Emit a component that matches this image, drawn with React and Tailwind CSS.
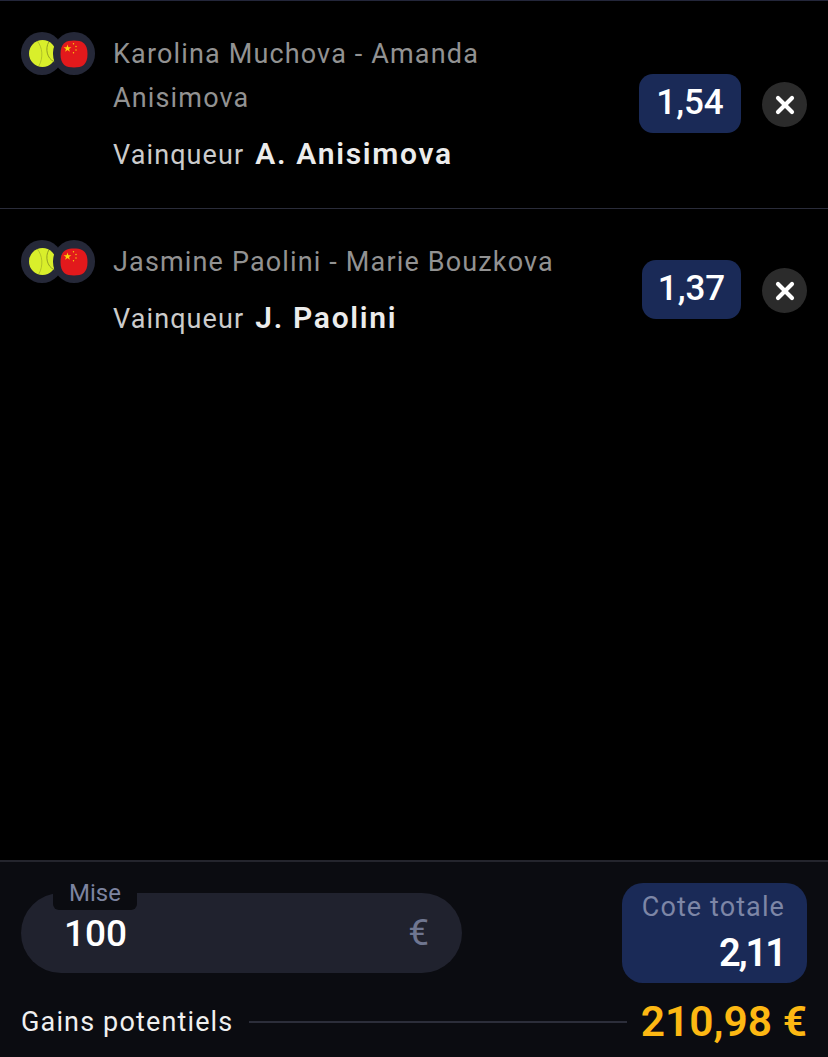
import React from 'react';
import { X } from 'lucide-react';

const font = "font-['Roboto',sans-serif]";

function TennisBall() {
  return (
    <svg width="27" height="27" viewBox="0 0 26 26">
      <circle cx="13" cy="13" r="13" fill="#d9ef2b" />
      <path d="M8 1C13 7 14 17 9.5 25" fill="none" stroke="#a3b226" strokeWidth="0.7" />
      <path d="M19 2C15.5 8 17 18 24.5 21" fill="none" stroke="#8d9a22" strokeWidth="0.9" />
    </svg>
  );
}

function ChinaFlag() {
  return (
    <svg width="28" height="28" viewBox="0 0 28 28">
      <path d="M14 .5C22 .5 27.5 3 27.5 14S22 27.5 14 27.5.5 25 .5 14 6 .5 14 .5Z" fill="#e2191c" />
      <path d="M7.5 4.5l.9 2.8h3l-2.4 1.7.9 2.8-2.4-1.7-2.4 1.7.9-2.8-2.4-1.7h3Z" fill="#fbd40c" />
      <circle cx="13.5" cy="3.8" r="0.7" fill="#fbd40c" />
      <circle cx="16" cy="6.5" r="0.7" fill="#fbd40c" />
      <circle cx="16" cy="10" r="0.7" fill="#fbd40c" />
      <circle cx="13.5" cy="12.8" r="0.7" fill="#fbd40c" />
    </svg>
  );
}

function MatchIcons() {
  return (
    <div className="flex shrink-0 self-start">
      <div className="w-[42px] h-[43px] rounded-full bg-[#252838] flex items-center justify-center">
        <TennisBall />
      </div>
      <div className="w-[42px] h-[43px] -ml-[10px] rounded-full bg-[#252838] flex items-center justify-center relative">
        <ChinaFlag />
      </div>
    </div>
  );
}

function Selection({ match, winner, odd, oddWidth, className }) {
  return (
    <div className={`flex items-center pt-[31px] pb-[31px] px-[21px] ${className}`}>
      <MatchIcons />
      <div className="flex-1 ml-[18px] min-w-0">
        <div className="text-[27px] leading-[44px] tracking-[1.15px] text-[#929292] w-[470px]">{match}</div>
        <div className="mt-[12px] flex items-baseline text-[27px] leading-[44px] tracking-[1.1px]">
          <span className="text-[#cccccc]">Vainqueur</span>
          <span className="ml-[11px] text-[30px] font-semibold text-[#ececec] tracking-[1.7px]">{winner}</span>
        </div>
      </div>
      <div className={`${oddWidth} h-[59px] mb-[2px] rounded-[14px] bg-[#1a2a57] flex items-center justify-center text-[35px] font-medium text-white`}>
        {odd}
      </div>
      <div className="w-[45px] h-[45px] ml-[21px] rounded-full bg-[#2b2b2b] flex items-center justify-center text-white">
        <X size={28} strokeWidth={3.6} />
      </div>
    </div>
  );
}

export default function App() {
  return (
    <div className={`h-[1057px] w-[828px] flex flex-col bg-black overflow-hidden ${font}`}>
      <div className="h-px bg-[#23263a]" />
      <Selection
        className="border-b border-[#2a2c3a]"
        match="Karolina Muchova - Amanda Anisimova"
        winner="A. Anisimova"
        odd="1,54"
        oddWidth="w-[102px]"
      />
      <Selection
        match="Jasmine Paolini - Marie Bouzkova"
        winner="J. Paolini"
        odd="1,37"
        oddWidth="w-[99px]"
      />
      <div className="flex-1" />
      <div className="h-[197px] border-t-2 border-[#24252d] bg-[#0b0c11] px-[21px]">
        <div className="flex justify-between pt-[21px]">
          <div className="relative w-[441px] h-[80px] mt-[10px] rounded-full bg-[#20222e] flex items-center justify-between pl-[43px] pr-[33px]">
            <span className="absolute left-[32px] -top-[12px] w-[84px] h-[29px] rounded-b-[6px] bg-[#0b0c11] text-center text-[24px] leading-[24px] text-[#7d84a0]">Mise</span>
            <span className="mt-[2px] text-[37px] font-medium text-white">100</span>
            <span className="text-[37px] text-[#6f7690]">€</span>
          </div>
          <div className="w-[185px] h-[100px] rounded-[21px] bg-[#1a2a57] flex flex-col items-end pr-[22px] pt-[7px]">
            <span className="text-[27px] leading-[34px] tracking-[1.1px] text-[#7d86a6]">Cote totale</span>
            <span className="mt-[7px] text-[38px] leading-[44px] font-semibold tracking-[-2px] text-white">2,11</span>
          </div>
        </div>
        <div className="flex items-center mt-[17px]">
          <span className="text-[27px] leading-[44px] tracking-[1.15px] text-[#f0f0f0]">Gains potentiels</span>
          <div className="flex-1 h-[2px] ml-[16px] mr-[14px] bg-[#2c2e3a]" />
          <span className="text-[42.5px] leading-[44px] font-semibold text-[#fdb813]">210,98 €</span>
        </div>
      </div>
    </div>
  );
}
